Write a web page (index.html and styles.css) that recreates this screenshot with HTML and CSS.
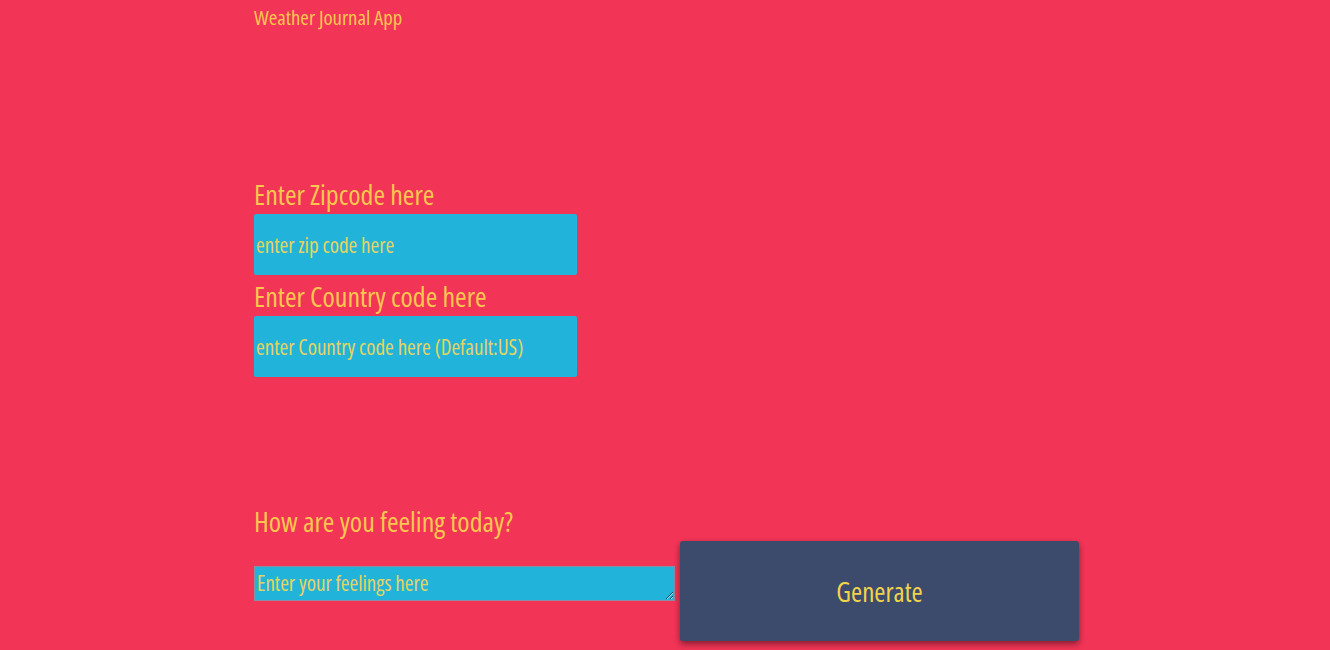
FILE: index.html
```html
<!DOCTYPE html>
<html lang="en">
<head>
<meta charset="utf-8">
<title>Weather Journal App</title>
<link rel="stylesheet" href="styles.css">
</head>
<body>
<main class="app">
  <div class="title">Weather Journal App</div>
  <section class="codes">
    <label class="label" for="zip">Enter Zipcode here</label>
    <input class="field" id="zip" type="text" placeholder="enter zip code here">
    <label class="label" for="country">Enter Country code here</label>
    <input class="field" id="country" type="text" placeholder="enter Country code here (Default:US)">
  </section>
  <section class="feel">
    <label class="label" for="feelings">How are you feeling today?</label>
    <div class="feel-row">
      <textarea class="feelings" id="feelings" rows="1" placeholder="Enter your feelings here"></textarea>
      <button class="generate" type="button">Generate</button>
    </div>
  </section>
</main>
</body>
</html>
```
FILE: styles.css
```css
html, body {
  margin: 0;
  padding: 0;
  height: 100%;
  overflow: hidden;
}
body {
  background: #f23457;
  font-family: "Open Sans", "Roboto Condensed", sans-serif;
  font-stretch: 75%;
  font-weight: 500;
  color: #fbc74e;
}
.app {
  padding-left: 254px;
}
.title {
  font-size: 20.7px;
  line-height: 24px;
  padding-top: 5px;
}
.codes {
  display: flex;
  flex-direction: column;
  align-items: flex-start;
  margin-top: 152px;
}
.label {
  display: block;
  font-size: 28px;
  line-height: 27px;
  margin-bottom: 6px;
}
.field {
  box-sizing: border-box;
  width: 323px;
  height: 61px;
  margin: 0 0 8px 0;
  padding: 0 2px;
  border: none;
  border-radius: 2px;
  background: #22b3db;
  font-family: inherit;
  font-stretch: 75%;
  font-weight: 500;
  font-size: 21px;
  color: #e6d35e;
  outline: none;
}
.field::placeholder {
  color: #e6d35e;
  opacity: 1;
}
.feel {
  margin-top: 123px;
}
.feel-row {
  display: flex;
  align-items: flex-start;
  gap: 5px;
}
.feelings {
  box-sizing: border-box;
  width: 421px;
  height: 35px;
  margin-top: 25px;
  padding: 3px 2px;
  border: 1px solid #8a8fa6;
  background: #22b3db;
  font-family: inherit;
  font-stretch: 75%;
  font-weight: 500;
  font-size: 21px;
  line-height: 26px;
  color: #e6d35e;
  outline: none;
  resize: vertical;
}
.feelings::placeholder {
  color: #e6d35e;
  opacity: 1;
}
.generate {
  width: 399px;
  height: 100px;
  border: none;
  border-radius: 3px;
  background: #3c4b6b;
  color: #f2d34c;
  font-family: inherit;
  font-stretch: 75%;
  font-weight: 500;
  font-size: 27px;
  box-shadow: 0 3px 6px rgba(0, 0, 0, 0.45);
  cursor: pointer;
}
```
